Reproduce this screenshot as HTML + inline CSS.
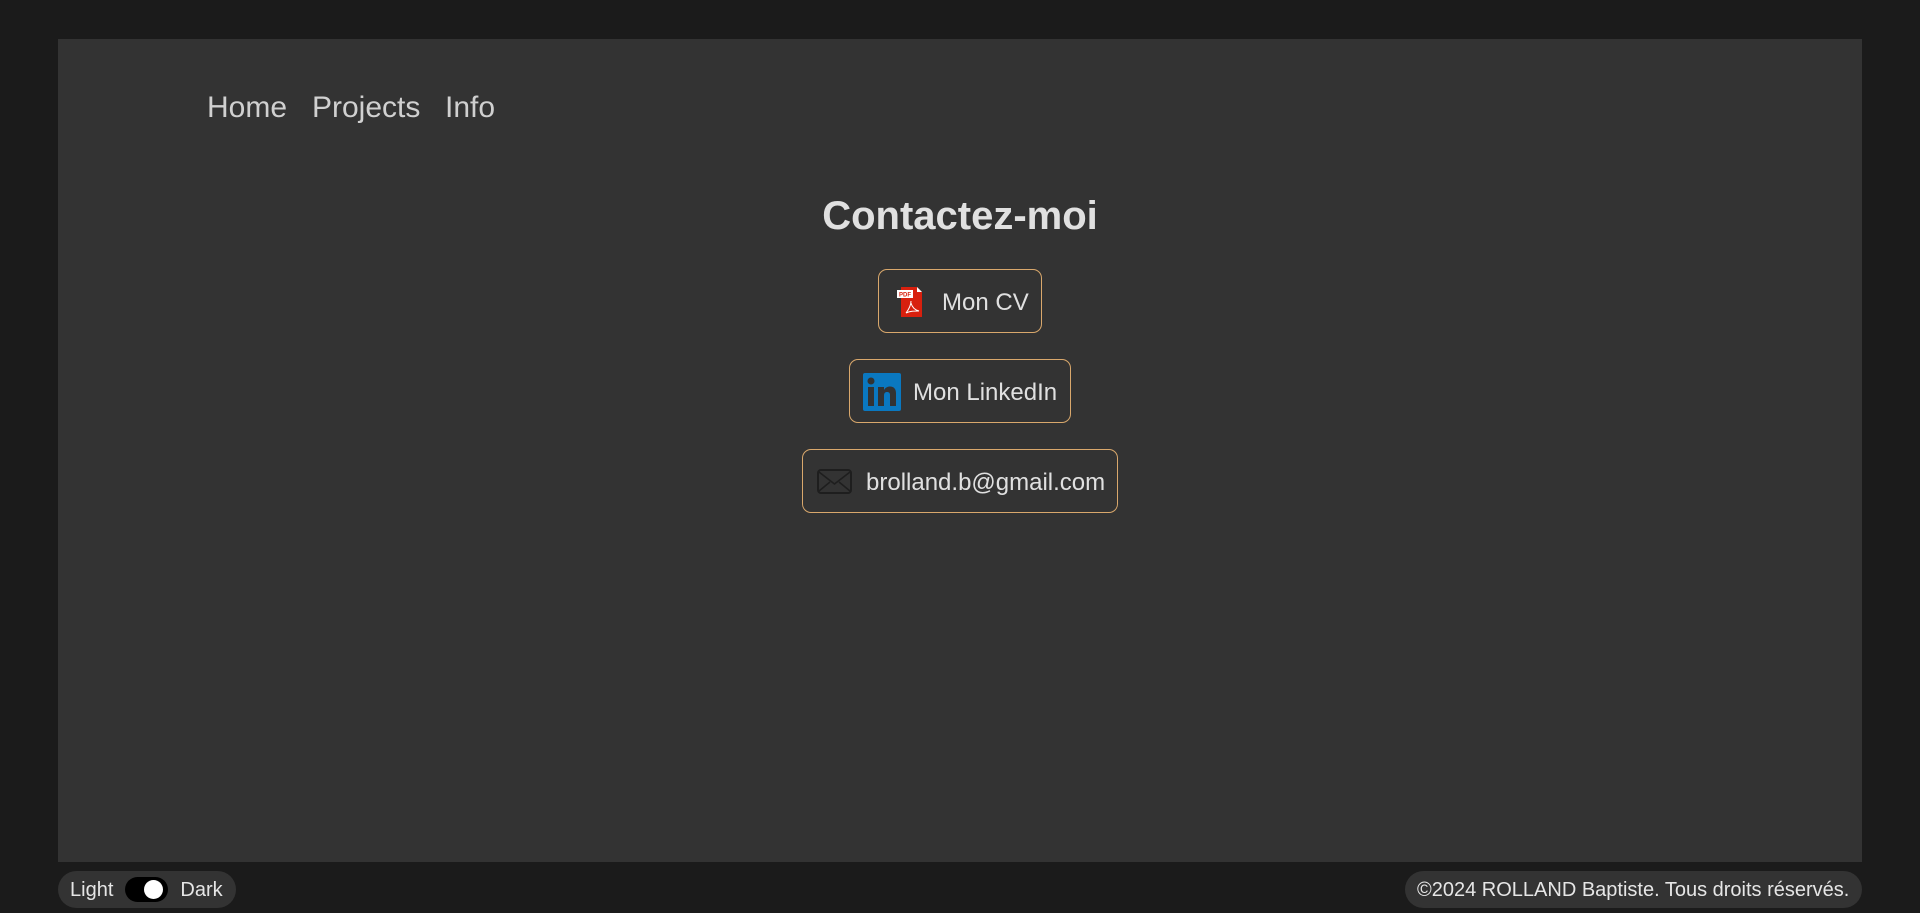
<!DOCTYPE html>
<html><head><meta charset="utf-8"><style>
html,body{margin:0;padding:0}
body{width:1920px;height:913px;background:#1b1b1b;font-family:"Liberation Sans",Arial,sans-serif;color:#d8d8d8;position:relative;overflow:hidden}
.panel{position:absolute;left:58px;top:39px;width:1804px;height:823px;background:#333}
.nav{position:absolute;top:90px;font-size:30px;color:#d0d0d0;line-height:36px}
h1{position:absolute;left:0;width:1920px;text-align:center;top:192px;margin:0;font-size:40px;font-weight:bold;color:#e0e0e0;line-height:48px}
.btn{position:absolute;height:64px;border:1px solid #d9a86c;border-radius:9px;box-sizing:border-box;display:flex;align-items:center;font-size:24px;color:#e0e0e0}
.pill{position:absolute;top:871px;height:37px;background:#333;border-radius:19px;display:flex;align-items:center;font-size:20px;color:#e6e6e6;box-sizing:border-box;padding-top:2px}
</style></head><body>
<div class="panel"></div>
<div class="nav" style="left:207px">Home</div>
<div class="nav" style="left:312px">Projects</div>
<div class="nav" style="left:445px">Info</div>
<h1>Contactez-moi</h1>
<div class="btn" style="left:878px;top:269px;width:164px;">
 <svg style="position:absolute;left:18px;top:17px" width="28" height="30" viewBox="0 0 28 30"><path d="M4 0h16l5 5v25H4z" fill="#d8200e"/><path d="M20 0v5h5z" fill="#fff"/><rect x="0" y="3" width="16" height="8" fill="#fff"/><text x="2" y="9.5" font-size="6" fill="#d8200e" font-family="Liberation Sans" font-weight="bold">PDF</text><path d="M9 26c3-4 5-8 5-12M14 16c1 4 4 7 8 8M9 26c4-2 8-2 13-2" stroke="#fff" stroke-width="1" fill="none"/></svg>
 <span style="position:absolute;left:63px;top:19px">Mon CV</span></div>
<div class="btn" style="left:849px;top:359px;width:222px;">
 <svg style="position:absolute;left:13px;top:13px" width="38" height="38" viewBox="0 0 38 38"><rect width="38" height="38" rx="2" fill="#0a78c0"/><rect x="5" y="14" width="6" height="19" fill="#333"/><circle cx="8" cy="8" r="3.5" fill="#333"/><path d="M15 14h6v3c1.5-2.5 3.5-3.5 6-3.5 4 0 6 2.5 6 7V33h-6V22c0-2-1-3-3-3s-3 1.3-3 3.5V33h-6z" fill="#333"/></svg>
 <span style="position:absolute;left:63px;top:19px">Mon LinkedIn</span></div>
<div class="btn" style="left:802px;top:449px;width:316px;">
 <svg style="position:absolute;left:14px;top:19px" width="35" height="25" viewBox="0 0 35 25"><rect x="1" y="1" width="33" height="23" rx="3" fill="none" stroke="#1e1e1e" stroke-width="2"/><path d="M2 3l15.5 12L33 3M2 22l11-9M33 22l-11-9" stroke="#1e1e1e" stroke-width="1.6" fill="none"/></svg>
 <span style="position:absolute;left:63px;top:19px">brolland.b@gmail.com</span></div>
<div class="pill" style="left:58px;width:178px;padding-left:12px">Light
 <span style="display:inline-block;width:43px;height:25px;background:#000;border-radius:13px;margin:-2px 12px 0 12px;position:relative"><span style="position:absolute;right:5px;top:3px;width:19px;height:19px;background:#fff;border-radius:50%"></span></span>Dark</div>
<div class="pill" style="left:1405px;width:457px;padding-left:12px">©2024 ROLLAND Baptiste. Tous droits réservés.</div>
</body></html>
